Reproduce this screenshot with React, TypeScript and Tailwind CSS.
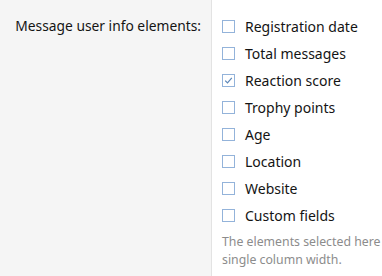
const items = [
  { label: "Registration date", checked: false },
  { label: "Total messages", checked: false },
  { label: "Reaction score", checked: true },
  { label: "Trophy points", checked: false },
  { label: "Age", checked: false },
  { label: "Location", checked: false },
  { label: "Website", checked: false },
  { label: "Custom fields", checked: false },
];

function Box({ checked }: { checked: boolean }) {
  return (
    <span className="flex h-[13px] w-[13px] shrink-0 items-center justify-center border border-[#93b3da] bg-white">
      {checked && (
        <svg width="9" height="9" viewBox="0 0 9 9" fill="none">
          <path d="M1.2 4.6 L3.5 6.9 L7.8 1.9" stroke="#5b86b8" strokeWidth="1.2" />
        </svg>
      )}
    </span>
  );
}

export default function App() {
  return (
    <div
      className="flex h-[276px] w-[382px] overflow-hidden bg-white text-[#141414]"
      style={{ fontFamily: '"Noto Sans", "Open Sans", sans-serif' }}
    >
      <div className="w-[212px] shrink-0 border-r border-[#e3e3e3] bg-[#f5f5f5] pr-[10px] pt-[13px] text-right text-[13.8px] leading-[26px]">
        Message user info elements:
      </div>
      <div className="flex-1 pl-[10px] pt-[13px]">
        <ul>
          {items.map((it) => (
            <li key={it.label} className="flex h-[27px] items-center gap-[10px] text-[14px]">
              <Box checked={it.checked} />
              <span>{it.label}</span>
            </li>
          ))}
        </ul>
        <p className="mt-[4px] whitespace-nowrap text-[12.3px] leading-[18px] text-[#8c8c8c]">
          The elements selected here
          <br />
          single column width.
        </p>
      </div>
    </div>
  );
}
